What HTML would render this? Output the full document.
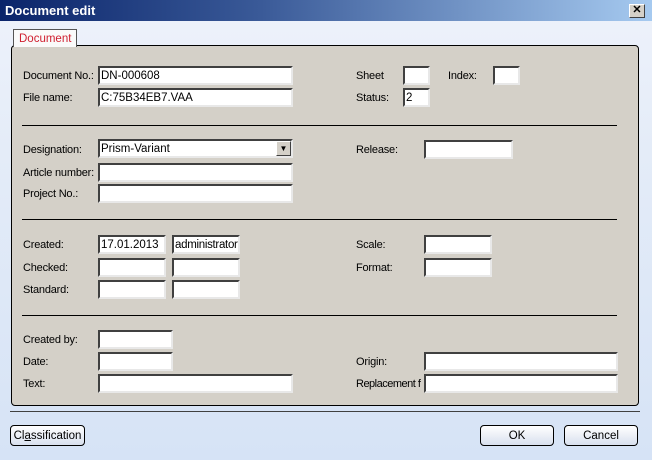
<!DOCTYPE html><html><head><style>
*{margin:0;padding:0;box-sizing:border-box}
body{width:652px;height:460px;position:relative;overflow:hidden;font:11px "Liberation Sans",sans-serif;color:#000;background:linear-gradient(#eef2fb 0,#e4ecf8 150px,#d6e3f6 460px)}
.a{position:absolute}
.t{height:21px;left:0;top:0;width:652px;background:linear-gradient(90deg,#0a246a,#3a5a98 40%,#a6caf0);color:#fff;font-weight:bold;font-size:13px;padding:3px 0 0 5px}
.x{left:629px;top:4px;width:16px;height:14px;background:#d4d0c8;border:1px solid;border-color:#fff #404040 #404040 #fff;font-size:11px;line-height:11px;text-align:center;font-weight:bold;color:#000}
.p{left:11px;top:45px;width:628px;height:361px;background:#d4d0c8;border:1px solid #000;border-radius:4px}
.tab{left:13px;top:29px;width:64px;height:18px;background:#fafafa;border:1px solid #555;border-bottom:none;color:#d02030;padding:3px 0 0 5px;font-size:11.5px}
.l{position:absolute;white-space:nowrap;font-size:11px;letter-spacing:-0.2px}
.i{position:absolute;z-index:2;background:#fff;border:2px solid;border-color:#404040 #e8e8e8 #e8e8e8 #404040;height:19px;padding:2px 0 0 1px;white-space:nowrap;overflow:hidden;font-size:11.5px;line-height:13px}
.h{position:absolute;left:22px;width:595px;height:1px;background:#000}
.b{position:absolute;top:425px;height:21px;border:1px solid #000;border-radius:4px;background:linear-gradient(#fff,#d8e0ee);text-align:center;padding-top:4px;font-size:11.5px}
</style></head><body>
<div class="a t">Document edit</div>
<div class="a x">✕</div>
<div class="a p"></div>
<div class="a tab">Document</div>
<span class="l" style="left:23px;top:70px">Document No.:</span><div class="i" style="left:98px;top:66px;width:195px">DN-000608</div>
<span class="l" style="left:23px;top:92px">File name:</span><div class="i" style="left:98px;top:88px;width:195px">C:75B34EB7.VAA</div>
<span class="l" style="left:356px;top:70px">Sheet</span><div class="i" style="left:403px;top:66px;width:27px"></div>
<span class="l" style="left:448px;top:70px">Index:</span><div class="i" style="left:493px;top:66px;width:27px"></div>
<span class="l" style="left:356px;top:92px">Status:</span><div class="i" style="left:403px;top:88px;width:27px">2</div>
<div class="h" style="top:125px"></div>
<span class="l" style="left:23px;top:144px">Designation:</span><div class="i" style="left:98px;top:139px;width:195px">Prism-Variant<div class="a" style="right:0;top:0;width:15px;height:15px;background:#d4d0c8;border:1px solid;border-color:#fff #404040 #404040 #fff;font-size:8px;text-align:center;line-height:13px">▼</div></div>
<span class="l" style="left:356px;top:144px">Release:</span><div class="i" style="left:424px;top:140px;width:89px"></div>
<span class="l" style="left:23px;top:167px">Article number:</span><div class="i" style="left:98px;top:163px;width:195px"></div>
<span class="l" style="left:23px;top:188px">Project No.:</span><div class="i" style="left:98px;top:184px;width:195px"></div>
<div class="h" style="top:219px"></div>
<span class="l" style="left:23px;top:239px">Created:</span><div class="i" style="left:98px;top:235px;width:68px">17.01.2013</div><div class="i" style="left:172px;top:235px;width:68px;letter-spacing:-0.3px">administrator</div>
<span class="l" style="left:356px;top:239px">Scale:</span><div class="i" style="left:424px;top:235px;width:68px"></div>
<span class="l" style="left:23px;top:262px">Checked:</span><div class="i" style="left:98px;top:258px;width:68px"></div><div class="i" style="left:172px;top:258px;width:68px"></div>
<span class="l" style="left:356px;top:262px">Format:</span><div class="i" style="left:424px;top:258px;width:68px"></div>
<span class="l" style="left:23px;top:284px">Standard:</span><div class="i" style="left:98px;top:280px;width:68px"></div><div class="i" style="left:172px;top:280px;width:68px"></div>
<div class="h" style="top:315px"></div>
<span class="l" style="left:23px;top:334px">Created by:</span><div class="i" style="left:98px;top:330px;width:75px"></div>
<span class="l" style="left:23px;top:356px">Date:</span><div class="i" style="left:98px;top:352px;width:75px"></div>
<span class="l" style="left:356px;top:356px">Origin:</span><div class="i" style="left:424px;top:352px;width:194px"></div>
<span class="l" style="left:23px;top:378px">Text:</span><div class="i" style="left:98px;top:374px;width:195px"></div>
<span class="l" style="left:356px;top:378px;letter-spacing:-0.5px">Replacement f</span><div class="i" style="left:424px;top:374px;width:194px"></div>
<div class="a" style="left:10px;top:411px;width:630px;height:1px;background:#404040"></div>
<div class="b" style="left:10px;width:75px">Cl<u>a</u>ssification</div>
<div class="b" style="left:480px;width:74px">OK</div>
<div class="b" style="left:564px;width:74px">Cancel</div>
</body></html>
